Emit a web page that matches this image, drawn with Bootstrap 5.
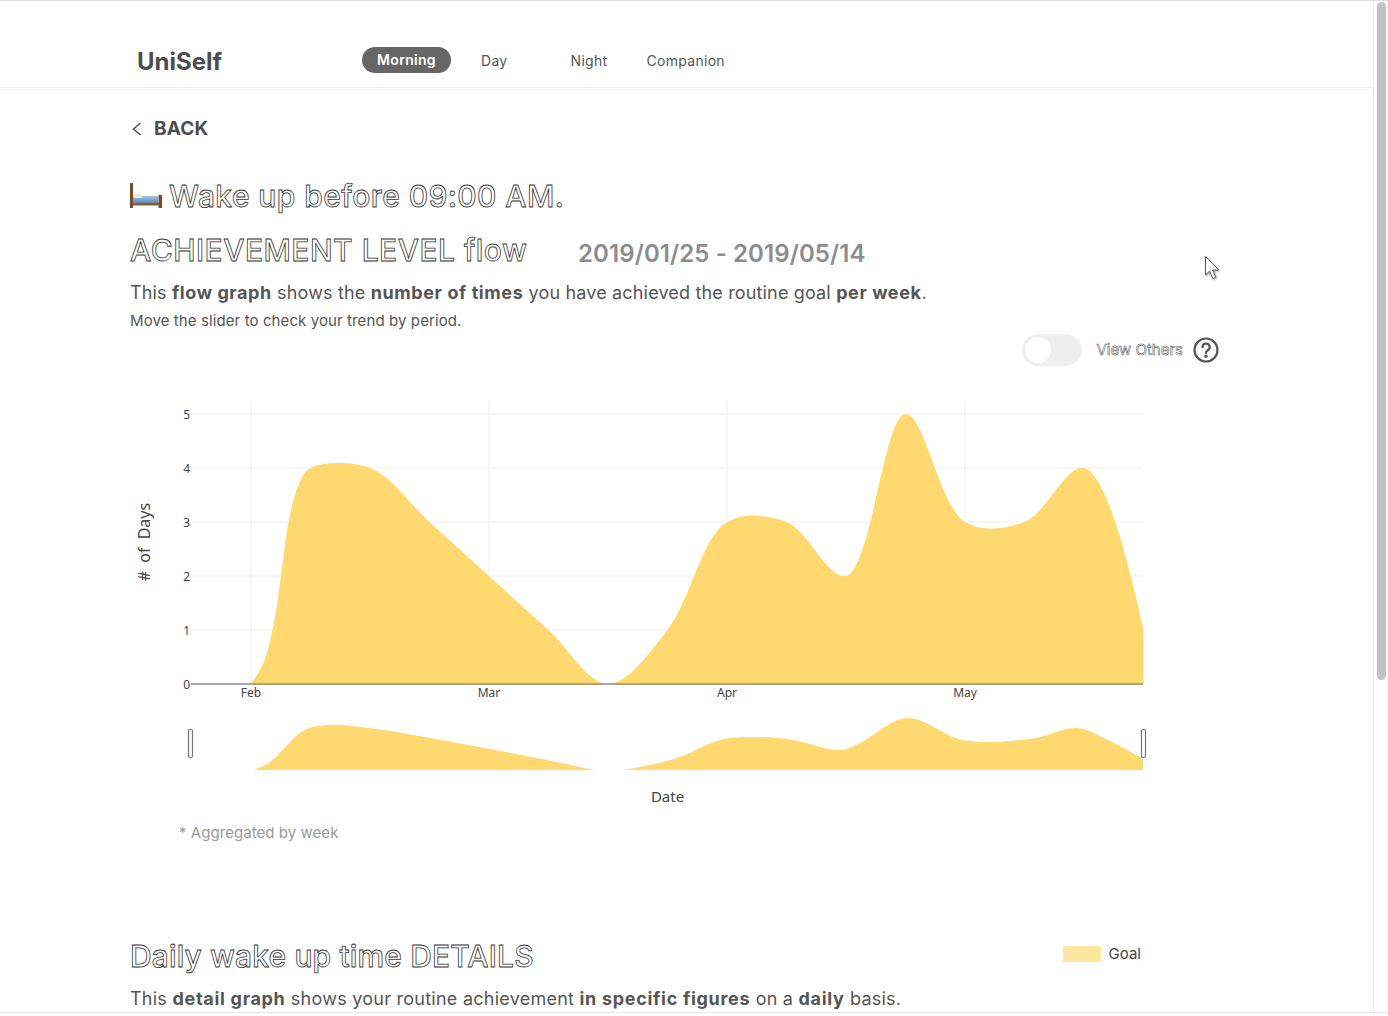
<!DOCTYPE html>
<html lang="en">

<head>
    <meta charset="UTF-8">
    <meta name="viewport" content="width=device-width, initial-scale=1.0">
    <title>UniSelf</title>
    <link href="https://cdn.jsdelivr.net/npm/bootstrap@5.3.0/dist/css/bootstrap.min.css" rel="stylesheet">
    <style>
        html, body {
            height: 100%;
            overflow: hidden;
        }

        body {
            font-family: Inter, "Noto Sans", sans-serif;
            color: #555;
            background: #fff;
        }

        .page-frame {
            height: 1013px;
            border-top: 1px solid #ddd;
            border-bottom: 1px solid #e8e8e8;
        }

        .page-main {
            width: 1373px;
            overflow: hidden;
        }

        .top-bar {
            height: 87px;
            padding: 41px 0 0 137px;
            border-bottom: 1px solid #ececec;
        }

        .top-rule {
            height: 2px;
            border-bottom: 1px solid #f3f3f3;
        }

        .brand-name {
            width: 225px;
            font-size: 24px;
            font-weight: 700;
            line-height: 40px;
            color: #4d4d4d;
        }

        .menu-row {
            padding-top: 6px;
        }

        .menu-link {
            font-size: 14px;
            letter-spacing: .3px;
            line-height: 26px;
            color: #555;
            text-decoration: none;
        }

        .menu-on {
            width: 89px;
            margin-top: -1px;
            background: #666;
            color: #fff;
            font-weight: 600;
            text-align: center;
            border-radius: 13px;
        }

        .menu-day {
            margin-left: 30px;
        }

        .menu-night {
            margin-left: 63px;
        }

        .menu-companion {
            margin-left: 39px;
        }

        .content-area {
            padding: 0 0 0 130px;
        }

        .back-row {
            margin-top: 26px;
            height: 26px;
            font-size: 19px;
            font-weight: 700;
            letter-spacing: .2px;
            line-height: 26px;
            color: #4d4d4d;
        }

        .outline-text {
            color: #fff;
            -webkit-text-stroke: .8px #333;
            font-weight: 500;
            font-size: 30px;
            margin: 0;
        }

        .goal-row {
            margin-top: 34px;
        }

        .goal-title {
            line-height: 40px;
            letter-spacing: .42px;
        }

        .bed-icon {
            width: 33px;
            height: 26px;
            margin-right: 6px;
            flex: none;
        }

        .level-row {
            margin-top: 13px;
            height: 42px;
        }

        .level-title {
            width: 448px;
            line-height: 42px;
            letter-spacing: .48px;
        }

        .date-span {
            font-size: 24px;
            font-weight: 600;
            letter-spacing: .1px;
            line-height: 42px;
            padding-top: 4px;
            color: #8c8c8c;
        }

        .intro-text {
            font-size: 18px;
            letter-spacing: .16px;
            line-height: 28px;
            margin: 8px 0 0;
        }

        .intro-text b {
            font-weight: 700;
            letter-spacing: .6px;
        }

        .hint-text {
            font-size: 15px;
            letter-spacing: .1px;
            line-height: 20px;
            margin: 4px 0 0;
        }

        .others-row {
            width: 1089px;
            margin-top: 3px;
            height: 32px;
        }

        .toggle-track {
            width: 60px;
            height: 32px;
            border-radius: 16px;
            background: #eee;
            padding: 3px;
        }

        .toggle-knob {
            width: 26px;
            height: 26px;
            border-radius: 50%;
            background: #fff;
        }

        .others-label {
            margin: 0 10px 0 14px;
            font-size: 15px;
            color: #fff;
            -webkit-text-stroke: .5px #444;
        }

        .chart-box {
            display: block;
            margin: 0 0 0 -130px;
        }

        .chart-box text {
            font-family: "Noto Sans", "DejaVu Sans", sans-serif;
            font-size: 12px;
            fill: #444;
        }

        .chart-box .axis-name {
            font-size: 15px;
        }

        .chart-box .axis-days {
            font-size: 16px;
            word-spacing: 4px;
        }

        .week-note {
            font-size: 15px;
            letter-spacing: .05px;
            line-height: 20px;
            color: #999;
            margin: 0 0 0 49px;
        }

        .details-row {
            width: 1011px;
            margin-top: 93px;
        }

        .details-title {
            line-height: 40px;
            letter-spacing: .14px;
        }

        .legend-box {
            margin-top: 7px;
        }

        .legend-swatch {
            width: 38px;
            height: 16px;
            background: #ffe6a0;
            margin-right: 8px;
        }

        .legend-name {
            font-size: 15px;
            color: #444;
        }

        .details-text {
            margin-top: 9px;
            letter-spacing: .25px;
        }

        .details-text b {
            letter-spacing: .7px;
        }

        .scroll-track {
            width: 15px;
            border-left: 1px solid #ececec;
            border-right: 1px solid #f2f2f2;
            padding: 1px 0 0 3px;
            background: #fff;
        }

        .scroll-thumb {
            width: 9px;
            height: 678px;
            background: #c2c2c2;
            border-radius: 5px;
        }

        .mouse-arrow {
            position: absolute;
            left: 1204px;
            top: 254px;
            filter: drop-shadow(1px 1px 1px rgba(0, 0, 0, .35));
        }
    </style>
</head>

<body>

    <div class="page-frame d-flex position-relative">
        <div class="page-main">
            <nav class="top-bar d-flex">
                <div class="brand-name">UniSelf</div>
                <div class="menu-row d-flex align-items-start">
                    <a class="menu-link menu-on" href="#">Morning</a>
                    <a class="menu-link menu-day" href="#">Day</a>
                    <a class="menu-link menu-night" href="#">Night</a>
                    <a class="menu-link menu-companion" href="#">Companion</a>
                </div>
            </nav>
            <div class="top-rule"></div>

            <div class="content-area">
                <div class="back-row d-flex align-items-center">
                    <svg width="24" height="26" viewBox="0 0 24 26" fill="none" stroke="#555" stroke-width="1.6">
                        <path d="M10.500 7 L3.500 13 L10.500 19"></path>
                    </svg>
                    <span>BACK</span>
                </div>

                <div class="goal-row d-flex align-items-center">
                    <svg class="bed-icon" viewBox="0 0 33 26">
                        <defs>
                            <linearGradient id="blanketFade" x1="0" y1="0" x2="0" y2="1">
                                <stop offset="0" stop-color="#a9c2dc"></stop>
                                <stop offset="1" stop-color="#5f87b3"></stop>
                            </linearGradient>
                        </defs>
                        <rect x="0" y="0" width="3" height="25" fill="#7a4a24"></rect>
                        <rect x="28.500" y="12" width="3.500" height="13" fill="#7a4a24"></rect>
                        <rect x="3" y="20" width="26" height="2.500" fill="#8a5a30"></rect>
                        <rect x="3" y="13" width="25.500" height="7" fill="url(#blanketFade)"></rect>
                        <rect x="3" y="11" width="9" height="4" rx="1.500" fill="#e8e8e8"></rect>
                    </svg>
                    <h1 class="outline-text goal-title">Wake up before 09:00 AM.</h1>
                </div>

                <div class="level-row d-flex">
                    <h2 class="outline-text level-title">ACHIEVEMENT LEVEL flow</h2>
                    <div class="date-span">2019/01/25 - 2019/05/14</div>
                </div>

                <p class="intro-text">This <b>flow graph</b> shows the <b>number of times</b> you have achieved the routine goal <b>per week</b>.</p>
                <p class="hint-text">Move the slider to check your trend by period.</p>

                <div class="others-row d-flex align-items-center justify-content-end">
                    <div class="toggle-track"><div class="toggle-knob"></div></div>
                    <span class="others-label">View Others</span>
                    <svg width="26" height="26" viewBox="0 0 26 26" fill="none" stroke="#555" stroke-width="2.200">
                        <circle cx="13" cy="13" r="11.500"></circle>
                        <path d="M9.500 10.200a3.600 3.600 0 1 1 5.400 3.100c-1.200.7-1.900 1.400-1.900 2.700" stroke-linecap="round"></path>
                        <circle cx="13" cy="19.300" r=".7" fill="#555"></circle>
                    </svg>
                </div>

                <svg class="chart-box" id="flowChart" width="1243" height="457" viewBox="0 366 1243 457">
                    <g stroke="#f4f4f4" stroke-width="1.500">
                        <path d="M191 414H1143M191 468H1143M191 522H1143M191 576H1143M191 630H1143"></path>
                        <path d="M251 400V684M489 400V684M727 400V684M965 400V684"></path>
                    </g>
                    <path id="mainArea" fill="#ffd96f"></path>
                    <path d="M191 684H1143" stroke="#8d8d8d" stroke-width="1.500"></path>
                    <path d="M252 684H600M616 684H1143" stroke="#b3a36f" stroke-width="1.500"></path>
                    <g text-anchor="end">
                        <text x="190" y="418.500">5</text>
                        <text x="190" y="472.500">4</text>
                        <text x="190" y="526.500">3</text>
                        <text x="190" y="580.500">2</text>
                        <text x="190" y="634.500">1</text>
                        <text x="190" y="688.500">0</text>
                    </g>
                    <g text-anchor="middle">
                        <text x="251" y="697">Feb</text>
                        <text x="489" y="697">Mar</text>
                        <text x="727" y="697">Apr</text>
                        <text x="965" y="697">May</text>
                        <text class="axis-name" x="667.500" y="802">Date</text>
                        <text class="axis-days" transform="translate(150 542) rotate(-90)"># of Days</text>
                    </g>
                    <path id="miniArea" fill="#ffd96f"></path>
                    <rect x="188.500" y="729.500" width="4" height="28" rx="1.500" fill="#fff" stroke="#777" stroke-width="1.200"></rect>
                    <rect x="1141.500" y="729.500" width="4" height="28" rx="1.500" fill="#fff" stroke="#777" stroke-width="1.200"></rect>
                </svg>

                <p class="week-note">* Aggregated by week</p>

                <div class="details-row d-flex justify-content-between align-items-start">
                    <h2 class="outline-text details-title">Daily wake up time DETAILS</h2>
                    <div class="legend-box d-flex align-items-center">
                        <div class="legend-swatch"></div>
                        <span class="legend-name">Goal</span>
                    </div>
                </div>
                <p class="intro-text details-text">This <b>detail graph</b> shows your routine achievement <b>in specific figures</b> on a <b>daily</b> basis.</p>
            </div>
        </div>

        <div class="scroll-track flex-shrink-0">
            <div class="scroll-thumb"></div>
        </div>

        <svg class="mouse-arrow" width="18" height="28" viewBox="0 0 18 28">
            <path d="M1.500 1.500V20l4.200-4 3 7.500 3-1.300-3-7.200h6z" fill="#fff" stroke="#555" stroke-width="1"></path>
        </svg>
    </div>

    <script>
        // same spline maths as the plot library, so the curve bends alike
        function splinePath(pts) {
            const tangents = [];
            for (let i = 1; i < pts.length - 1; i++) {
                const d1x = pts[i - 1][0] - pts[i][0], d1y = pts[i - 1][1] - pts[i][1];
                const d2x = pts[i + 1][0] - pts[i][0], d2y = pts[i + 1][1] - pts[i][1];
                const d1a = Math.pow(d1x * d1x + d1y * d1y, 0.25);
                const d2a = Math.pow(d2x * d2x + d2y * d2y, 0.25);
                const numx = d2a * d2a * d1x - d1a * d1a * d2x;
                const numy = d2a * d2a * d1y - d1a * d1a * d2y;
                const den1 = 3 * d2a * (d1a + d2a), den2 = 3 * d1a * (d1a + d2a);
                tangents.push([
                    [pts[i][0] + numx / den1, pts[i][1] + numy / den1],
                    [pts[i][0] - numx / den2, pts[i][1] - numy / den2]
                ]);
            }
            let d = 'M' + pts[0] + 'Q' + tangents[0][0] + ' ' + pts[1];
            for (let i = 2; i < pts.length - 1; i++) {
                d += 'C' + tangents[i - 2][1] + ' ' + tangents[i - 1][0] + ' ' + pts[i];
            }
            return d + 'Q' + tangents[tangents.length - 1][1] + ' ' + pts[pts.length - 1];
        }

        const weekly = [0, 4, 4, 3, 2, 1, 0, 1, 3, 3, 2, 5, 3, 3, 4, 1];
        const mainPts = weekly.map((v, i) => [251 + i * 59.5, 684 - v * 54]);
        // the first rise is steeper than the weekly points alone give
        mainPts.splice(1, 0, [263, 664], [273, 628], [281, 576], [289, 520], [299, 484]);
        document.getElementById('mainArea').setAttribute('d', splinePath(mainPts) + 'V684H251Z');

        const miniLeft = [[253, 770], [270, 762], [303, 731], [327, 725], [380, 729.5], [430, 738], [547, 760], [575, 766], [595, 770]];
        const miniRight = [[623, 770], [650, 765], [680, 757], [720, 740], [753, 737], [793, 740], [840, 750], [860, 743], [907, 718], [963, 740], [1030, 739], [1077, 728], [1110, 741], [1143, 759]];
        document.getElementById('miniArea').setAttribute('d',
            splinePath(miniLeft) + 'Z' + splinePath(miniRight) + 'V770H623Z');
    </script>

</body>

</html>
